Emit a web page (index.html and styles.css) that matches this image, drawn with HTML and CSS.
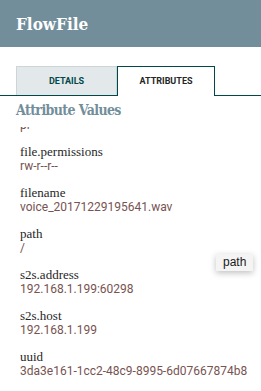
FILE: index.html
```html
<!DOCTYPE html>
<html lang="en">
<head>
    <meta charset="UTF-8">
    <meta name="viewport" content="width=device-width, initial-scale=1.0">
    <title>FlowFile</title>
    <link rel="stylesheet" href="styles.css">
</head>
<body>
    <div class="dialog-header">
        <span class="dialog-title">FlowFile</span>
    </div>

    <div class="tab-bar">
        <div class="tab">DETAILS</div>
        <div class="tab selected">ATTRIBUTES</div>
    </div>

    <div class="tab-content">
        <div class="section-title">Attribute Values</div>
        <div class="attr-list">
            <div class="attr-scroll">
                <div class="attr">
                    <div class="attr-name">file.owner</div>
                    <div class="attr-value">pi</div>
                </div>
                <div class="attr">
                    <div class="attr-name">file.permissions</div>
                    <div class="attr-value">rw-r--r--</div>
                </div>
                <div class="attr">
                    <div class="attr-name">filename</div>
                    <div class="attr-value">voice_20171229195641.wav</div>
                </div>
                <div class="attr">
                    <div class="attr-name">path</div>
                    <div class="attr-value">/</div>
                </div>
                <div class="attr">
                    <div class="attr-name">s2s.address</div>
                    <div class="attr-value">192.168.1.199:60298</div>
                </div>
                <div class="attr">
                    <div class="attr-name">s2s.host</div>
                    <div class="attr-value">192.168.1.199</div>
                </div>
                <div class="attr">
                    <div class="attr-name">uuid</div>
                    <div class="attr-value">3da3e161-1cc2-48c9-8995-6d07667874b8</div>
                </div>
            </div>
        </div>
    </div>

    <div class="tooltip">path</div>
</body>
</html>
```

FILE: styles.css
```css
body {
    margin: 0;
    font-family: Roboto, "Liberation Sans", sans-serif;
    background: #fff;
    overflow: hidden;
}
.dialog-header {
    height: 47px;
    background-color: #728e9b;
    padding-left: 16px;
    display: flex;
    align-items: center;
}
.dialog-title {
    color: #fff;
    font-family: "DejaVu Serif", serif;
    font-stretch: condensed;
    font-weight: bold;
    font-size: 17px;
}
.tab-bar {
    display: flex;
    margin-top: 19px;
    padding-left: 16px;
    border-bottom: 1px solid #004849;
}
.tab {
    width: 99px;
    height: 28px;
    line-height: 28px;
    text-align: center;
    font-size: 9px;
    font-weight: bold;
    color: #004849;
    background: #e3e8eb;
    border: 1px solid #cbd5da;
    border-bottom: none;
}
.tab.selected {
    width: 96px;
    color: #262626;
    background: #fff;
    border-color: #004849;
    height: 29px;
    margin-bottom: -1px;
}
.tab-content {
    padding-left: 16px;
}
.section-title {
    margin-top: 5px;
    font-family: "DejaVu Serif", serif;
    font-stretch: condensed;
    font-weight: bold;
    font-size: 14px;
    letter-spacing: -0.6px;
    line-height: 18px;
    color: #728e9b;
}
.attr-list {
    margin-top: 8px;
    height: 270px;
    overflow: hidden;
}
.attr-scroll {
    margin-top: -24px;
    padding-left: 4px;
    white-space: nowrap;
}
.attr {
    margin-bottom: 11px;
}
.attr-name {
    font-family: "Liberation Serif", serif;
    font-size: 13px;
    line-height: 15px;
    color: #262626;
}
.attr-value {
    font-size: 12px;
    line-height: 15px;
    color: #775351;
}
.tooltip {
    position: absolute;
    left: 216px;
    top: 254px;
    padding: 2px 7px;
    font-family: "Liberation Sans", sans-serif;
    font-size: 12px;
    line-height: 13px;
    color: #1a1a1a;
    background: #f4f4f4;
    box-shadow: 0 2px 6px rgba(0, 0, 0, 0.25);
}
```
